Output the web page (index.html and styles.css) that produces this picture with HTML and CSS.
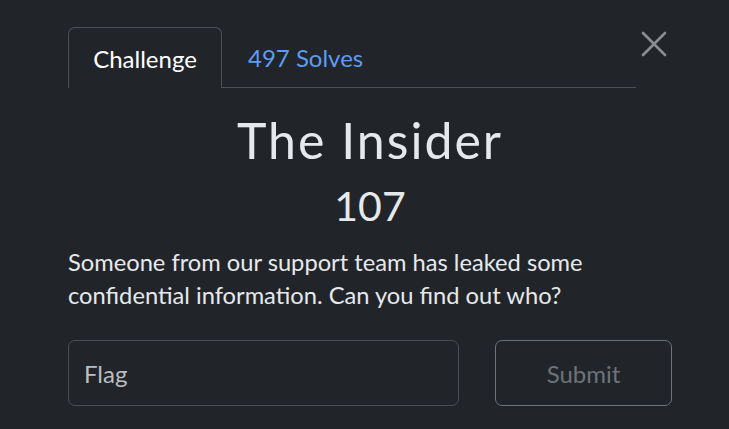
FILE: index.html
```html
<!DOCTYPE html>
<html>
<head>
<meta charset="utf-8">
<link rel="stylesheet" href="styles.css">
</head>
<body>
<div class="modal">
  <div class="tabs-row">
    <div class="tabs">
      <div class="tab active">Challenge</div>
      <div class="tab link">497 Solves</div>
      <div class="tab-rest"></div>
    </div>
    <button class="close" aria-label="Close">
      <svg width="26" height="26" viewBox="0 0 26 26"><path d="M2 2 L24 24 M24 2 L2 24" stroke="#8a8e92" stroke-width="2.6" stroke-linecap="round"/></svg>
    </button>
  </div>
  <h1 class="title">The Insider</h1>
  <div class="value">107</div>
  <p class="desc">Someone from our support team has leaked some confidential information. Can you find out who?</p>
  <div class="form">
    <div class="input">Flag</div>
    <div class="submit">Submit</div>
  </div>
</div>
</body>
</html>
```
FILE: styles.css
```css
html, body {
  margin: 0;
  padding: 0;
  background: #212529;
  font-family: Lato, "Open Sans", sans-serif;
}
.modal {
  padding: 26px 58px 0 68px;
  width: 604px;
}
.tabs-row {
  display: flex;
  align-items: flex-start;
}
.tabs {
  display: flex;
  align-items: flex-end;
  width: 568px;
  height: 62px;
}
.tab {
  font-size: 24px;
  height: 61px;
  display: flex;
  align-items: center;
  box-sizing: border-box;
}
.tab.active {
  color: #ffffff;
  border: 1px solid #4b5057;
  border-bottom: none;
  border-radius: 7px 7px 0 0;
  padding: 1px 0 0 0;
  width: 154px;
  justify-content: center;
}
.tab.link {
  color: #5d9cf0;
  padding: 1px 26px 0 26px;
  border-bottom: 1px solid #4b5057;
  height: 62px;
}
.tab-rest {
  flex: 1;
  border-bottom: 1px solid #4b5057;
}
.close {
  background: none;
  border: none;
  padding: 0;
  margin: 5px 0 0 5px;
  width: 26px;
  height: 26px;
}
.title {
  margin: 22px 0 0 0;
  text-align: center;
  font-weight: 400;
  font-size: 50px;
  letter-spacing: 2px;
  color: #e6e9ec;
  line-height: 60px;
}
.value {
  text-align: center;
  font-size: 41px;
  color: #e6e9ec;
  line-height: 52px;
  margin-top: 10px;
}
.desc {
  margin: 14px 0 0 0;
  font-size: 23.7px;
  line-height: 33px;
  color: #e6e9ec;
}
.form {
  display: flex;
  justify-content: space-between;
  margin-top: 28px;
}
.input {
  width: 391px;
  height: 66px;
  box-sizing: border-box;
  border: 1px solid #494e54;
  border-radius: 7px;
  padding: 0 15px;
  display: flex;
  align-items: center;
  font-size: 24px;
  color: #b9bec4;
}
.submit {
  width: 177px;
  height: 66px;
  box-sizing: border-box;
  border: 1px solid #6c737a;
  border-radius: 7px;
  display: flex;
  align-items: center;
  justify-content: center;
  font-size: 24px;
  color: #6c737a;
}
```
